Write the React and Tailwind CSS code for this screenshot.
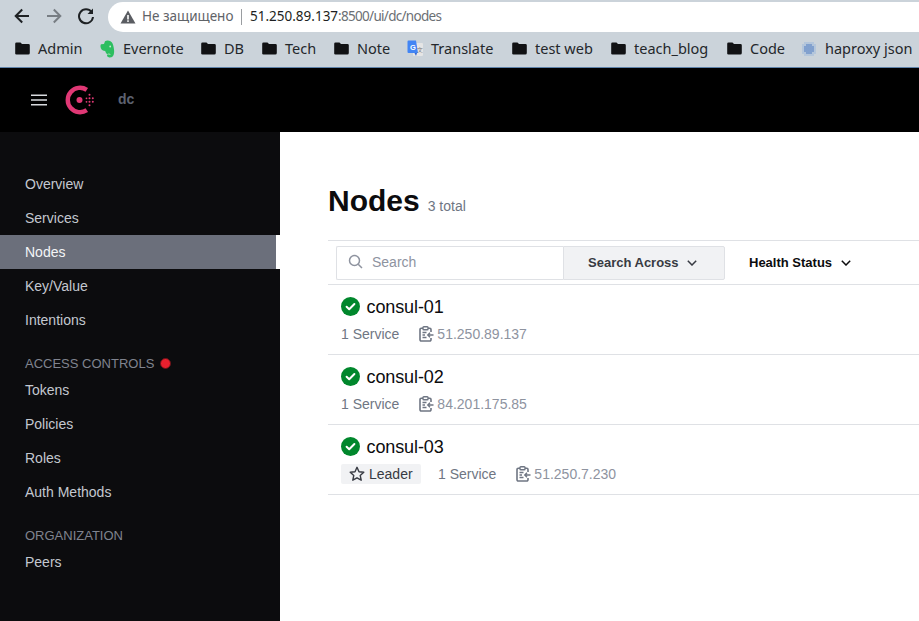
import React from "react";

const Folder = () => (
  <svg width="15" height="13" viewBox="0 0 15 13" className="shrink-0">
    <path d="M1.5 0.5H5.5L7 2H13.5A1.3 1.3 0 0 1 14.8 3.3V11A1.5 1.5 0 0 1 13.3 12.5H1.5A1.3 1.3 0 0 1 0.2 11V1.8A1.3 1.3 0 0 1 1.5 0.5Z" fill="#111214" />
  </svg>
);

const Evernote = () => (
  <svg width="15" height="18" viewBox="0 0 15 18" className="shrink-0">
    <path d="M5 1.2C6.5 0.2 9 0.3 10.5 1.2C12.5 2.3 13 4 13.6 7C14.2 10 14.5 12.5 13.6 15C12.8 17.2 10.5 17.8 8.7 17.3C7 16.8 6.5 15.2 7.6 14.3C6.2 13.6 5.6 12.5 5.2 11C3.2 11 1.6 10 0.9 8.2C0.3 6.5 0.4 5.2 1 4.2L4 4Z" fill="#2dbe60" />
    <circle cx="10.2" cy="6.5" r="0.9" fill="#c8e8d0" />
    <path d="M7.6 14.3C8.6 13.8 10 14 10.6 15" stroke="#c8e8d0" strokeWidth="0.8" fill="none" />
  </svg>
);

const Translate = () => (
  <svg width="16" height="17" viewBox="0 0 16 17" className="shrink-0">
    <rect x="6" y="3" width="10" height="13" rx="1" fill="#e5e5e5" />
    <path d="M1.5 0.5H9L11 13H1.5A1 1 0 0 1 0.5 12V1.5A1 1 0 0 1 1.5 0.5Z" fill="#4285f4" />
    <text x="3" y="9.5" fontSize="7.5" fontWeight="700" fill="#fff" fontFamily="Liberation Sans, sans-serif">G</text>
    <path d="M10 13L9 16L7.5 13Z" fill="#3367d6" />
    <text x="10" y="12" fontSize="6" fill="#777" fontFamily="Noto Sans, sans-serif">文</text>
  </svg>
);

const Haproxy = () => {
  const dots = [];
  for (let x = -6; x <= 6; x += 2) {
    for (let y = -6; y <= 6; y += 2) {
      const d = Math.hypot(x, y);
      if (d <= 7.4) {
        dots.push(<circle key={`${x}_${y}`} cx={8 + x} cy={8 + y} r="0.9" fill={d < 4.5 ? "#5f88c8" : "#a9bfdc"} />);
      }
    }
  }
  return (
    <svg width="16" height="16" viewBox="0 0 16 16" className="shrink-0">
      {dots}
    </svg>
  );
};

const ConsulLogo = () => (
  <svg width="30" height="30" viewBox="0 0 30 30" className="shrink-0">
    <path d="M21.8 4.9A12.2 12.2 0 1 0 21.8 25.1" fill="none" stroke="#e03875" strokeWidth="4.4" />
    <circle cx="14.5" cy="15" r="3" fill="#e03875" />
    <g fill="#e03875">
      <circle cx="24.5" cy="9.8" r="1" />
      <circle cx="24.5" cy="13.3" r="1" />
      <circle cx="24.5" cy="16.8" r="1" />
      <circle cx="24.5" cy="20.3" r="1" />
      <circle cx="27.8" cy="13.3" r="1" />
      <circle cx="27.8" cy="16.8" r="1" />
      <circle cx="21.5" cy="13.3" r="0.9" />
      <circle cx="21.5" cy="16.8" r="0.9" />
    </g>
  </svg>
);

const Check = () => (
  <svg width="19" height="19" viewBox="0 0 19 19" className="shrink-0 mb-px">
    <circle cx="9.5" cy="9.5" r="9.5" fill="#00872c" />
    <path d="M5.6 9.8L8.2 12.3L13.4 7" fill="none" stroke="#fff" strokeWidth="2" strokeLinecap="round" strokeLinejoin="round" />
  </svg>
);

const Clipboard = () => (
  <svg width="15" height="16" viewBox="0 0 15 16" className="shrink-0">
    <path d="M4 2.2H2.2A1.2 1.2 0 0 0 1 3.4V13.8A1.2 1.2 0 0 0 2.2 15H10.8A1.2 1.2 0 0 0 12 13.8V12M12 6V3.4A1.2 1.2 0 0 0 10.8 2.2H9" fill="none" stroke="#6f7683" strokeWidth="1.6" />
    <rect x="4" y="0.8" width="5" height="3" rx="0.8" fill="none" stroke="#6f7683" strokeWidth="1.4" />
    <path d="M3.5 6.5H7.5M3.5 9H6M3.5 11.5H7.5" stroke="#6f7683" strokeWidth="1.3" />
    <path d="M14.5 9H9M11 6.8L8.8 9L11 11.2" fill="none" stroke="#6f7683" strokeWidth="1.4" />
  </svg>
);

const Star = () => (
  <svg width="16" height="16" viewBox="0 0 16 16" className="shrink-0">
    <path d="M8 1.3L10 5.7L14.8 6.2L11.2 9.4L12.2 14.2L8 11.8L3.8 14.2L4.8 9.4L1.2 6.2L6 5.7Z" fill="none" stroke="#373a42" strokeWidth="1.4" strokeLinejoin="round" />
  </svg>
);

const Chevron = ({ color }) => (
  <svg width="10" height="6" viewBox="0 0 10 6" className="shrink-0">
    <path d="M0.8 0.8L5 5L9.2 0.8" fill="none" stroke={color} strokeWidth="1.5" />
  </svg>
);

const bookmarks = [
  { icon: <Folder />, label: "Admin", w: "w-[85px]" },
  { icon: <Evernote />, label: "Evernote", w: "w-[101px]" },
  { icon: <Folder />, label: "DB", w: "w-[61px]" },
  { icon: <Folder />, label: "Tech", w: "w-[72px]" },
  { icon: <Folder />, label: "Note", w: "w-[73px]" },
  { icon: <Translate />, label: "Translate", w: "w-[105px]" },
  { icon: <Folder />, label: "test web", w: "w-[99px]" },
  { icon: <Folder />, label: "teach_blog", w: "w-[116px]" },
  { icon: <Folder />, label: "Code", w: "w-[74px]" },
  { icon: <Haproxy />, label: "haproxy json", w: "w-[118px]" },
];

const NavItem = ({ label, active }) =>
  active ? (
    <div className="h-[34px] bg-white">
      <div className="h-[34px] w-[276px] flex items-center pl-[25px] bg-[#6b6f7b] text-[#f4f5f7] text-sm">{label}</div>
    </div>
  ) : (
    <div className="h-[34px] flex items-center pl-[25px] text-[#c4c8d0] text-sm">{label}</div>
  );

const Node = ({ name, ip, leader }) => (
  <div className="h-[70px] border-b border-[#dfe1e5] pl-[13px] pt-[12px]">
    <div className="flex items-center h-5 gap-[6.5px] text-[18px] text-[#0c0c0e]">
      <Check />
      <span className="tracking-[-0.1px]">{name}</span>
    </div>
    <div className="flex items-center h-5 mt-[7px] text-sm text-[#6f7683]">
      {leader && (
        <div className="flex items-center h-5 w-[80px] mr-[17px] pl-[8px] gap-[4px] rounded-[2px] bg-[#f1f2f4] text-[#373a42]">
          <Star />
          <span>Leader</span>
        </div>
      )}
      <span className="mr-[20px]">1 Service</span>
      <Clipboard />
      <span className="ml-[3px] text-[#8e939f]">{ip}</span>
    </div>
  </div>
);

export default function App() {
  return (
    <div className="w-[919px] h-[621px] overflow-hidden flex flex-col bg-white font-['Liberation_Sans',Arial,sans-serif]">
      <div className="h-[68px] shrink-0 bg-[#cbd3da] border-b border-[#5f83ab] font-['Noto_Sans',sans-serif]">
        <div className="h-[32px] flex items-center">
          <svg width="18" height="18" viewBox="0 0 18 18" className="ml-[13px] shrink-0">
            <path d="M16 9H3M9.2 2.5L2.7 9L9.2 15.5" fill="none" stroke="#1e2124" strokeWidth="2" />
          </svg>
          <svg width="18" height="18" viewBox="0 0 18 18" className="ml-[14px] shrink-0">
            <path d="M2 9H15M8.8 2.5L15.3 9L8.8 15.5" fill="none" stroke="#777d83" strokeWidth="2" />
          </svg>
          <svg width="18" height="18" viewBox="0 0 18 18" className="ml-[14px] shrink-0">
            <path d="M14.6 5A7 7 0 1 0 16 10" fill="none" stroke="#1e2124" strokeWidth="2" />
            <path d="M16 1.5V7H10.5Z" fill="#1e2124" />
          </svg>
          <div className="ml-[13px] flex-1 h-[30px] mt-[1px] bg-white rounded-l-[15px] flex items-center leading-none">
            <svg width="16" height="14" viewBox="0 0 16 14" className="ml-[12px] shrink-0">
              <path d="M8 0.5L15.5 13.5H0.5Z" fill="#5a5d62" />
              <rect x="7.2" y="5" width="1.6" height="4.5" fill="#fff" />
              <rect x="7.2" y="10.3" width="1.6" height="1.6" fill="#fff" />
            </svg>
            <span className="ml-[6px] text-[#5f6368] w-[99px] whitespace-nowrap text-[13.5px]">Не защищено</span>
            <div className="w-px h-[16px] bg-[#9a9da1]" />
            <span className="ml-[8px] text-[#1d1f22] text-[13.5px]">51.250.89.137</span>
            <span className="text-[#6b6f74] text-[13.5px] tracking-[-0.7px]">:8500/ui/dc/nodes</span>
          </div>
        </div>
        <div className="h-[35px] flex items-center pl-[15px] pb-[2px] text-[14.5px] text-[#24272b] whitespace-nowrap">
          {bookmarks.map((b) => (
            <div key={b.label} className={`flex items-center gap-[8px] shrink-0 ${b.w}`}>
              {b.icon}
              <span>{b.label}</span>
            </div>
          ))}
        </div>
      </div>
      <div className="h-[64px] shrink-0 bg-black flex items-center">
        <svg width="16" height="12" viewBox="0 0 16 12" className="ml-[31px] shrink-0">
          <path d="M0 1.2H16M0 6H16M0 10.8H16" stroke="#d8dade" strokeWidth="1.6" />
        </svg>
        <div className="ml-[18px]">
          <ConsulLogo />
        </div>
        <span className="ml-[23px] mb-[2px] text-sm font-bold text-[#5d6270]">dc</span>
      </div>
      <div className="flex-1 flex min-h-0">
        <div className="w-[280px] shrink-0 bg-[#0c0c0e] pt-[35px]">
          <NavItem label="Overview" />
          <NavItem label="Services" />
          <NavItem label="Nodes" active />
          <NavItem label="Key/Value" />
          <NavItem label="Intentions" />
          <div className="h-[36px] pt-[17px] pl-[25px] flex items-center gap-[6px] text-[13px] text-[#80848f]">
            <span className="leading-none">ACCESS CONTROLS</span>
            <span className="w-[11px] h-[11px] rounded-full bg-[#e8202e] border border-[#6a1218]" />
          </div>
          <NavItem label="Tokens" />
          <NavItem label="Policies" />
          <NavItem label="Roles" />
          <NavItem label="Auth Methods" />
          <div className="h-[36px] pt-[17px] pl-[25px] flex items-center text-[13px] text-[#80848f]">
            <span className="leading-none">ORGANIZATION</span>
          </div>
          <NavItem label="Peers" />
        </div>
        <div className="flex-1 min-w-0 pl-[48px] pt-[51px]">
          <div className="flex items-end h-[36px] text-[#0c0c0e]">
            <h1 className="text-[30px] leading-[36px] font-bold">Nodes</h1>
            <span className="ml-[8px] mb-[3px] leading-5 text-sm text-[#6f7683]">3 total</span>
          </div>
          <div className="mt-[21px] h-[45px] border-t border-b border-[#dfe1e5] flex items-center pl-[8px]">
            <div className="w-[227px] h-[34px] pb-[2px] flex items-center border border-[#dfe1e5] border-r-0 rounded-l-[2px] bg-white">
              <svg width="15" height="15" viewBox="0 0 15 15" className="ml-[11px] shrink-0">
                <circle cx="6.5" cy="6.5" r="5" fill="none" stroke="#8e939f" strokeWidth="1.5" />
                <path d="M10.2 10.2L14 14" stroke="#8e939f" strokeWidth="1.5" />
              </svg>
              <span className="ml-[9px] text-sm text-[#8e939f]">Search</span>
            </div>
            <div className="w-[162px] h-[34px] flex items-center pl-[24px] gap-[8px] bg-[#f1f2f4] border border-[#dfe1e5] rounded-r-[2px] text-[13px] font-bold text-[#373a42]">
              <span>Search Across</span>
              <Chevron color="#373a42" />
            </div>
            <div className="ml-[24px] flex items-center gap-[9px] text-[13px] font-bold text-[#0c0c0e]">
              <span>Health Status</span>
              <Chevron color="#0c0c0e" />
            </div>
          </div>
          <Node name="consul-01" ip="51.250.89.137" />
          <Node name="consul-02" ip="84.201.175.85" />
          <Node name="consul-03" ip="51.250.7.230" leader />
        </div>
      </div>
    </div>
  );
}
